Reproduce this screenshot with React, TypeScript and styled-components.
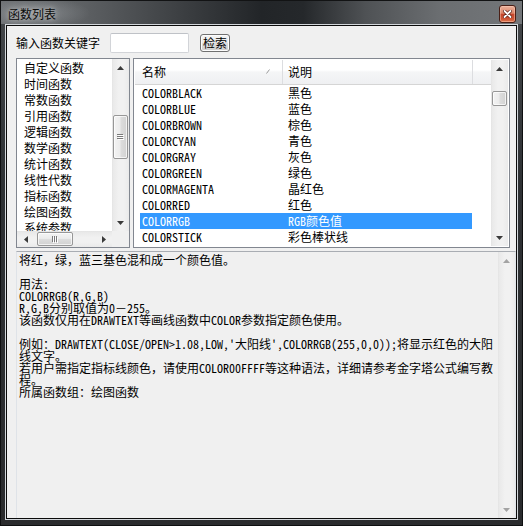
import React from "react";
import styled, { createGlobalStyle } from "styled-components";

const GlobalStyle = createGlobalStyle`
  html, body { margin: 0; padding: 0; background: #000; }
  body { width: 523px; height: 526px; overflow: hidden; }
  *, *::before, *::after { box-sizing: border-box; }
`;

const GROUPS = [
  "自定义函数",
  "时间函数",
  "常数函数",
  "引用函数",
  "逻辑函数",
  "数学函数",
  "统计函数",
  "线性代数",
  "指标函数",
  "绘图函数",
  "系统参数",
];

const FUNCS: [string, string][] = [
  ["COLORBLACK", "黑色"],
  ["COLORBLUE", "蓝色"],
  ["COLORBROWN", "棕色"],
  ["COLORCYAN", "青色"],
  ["COLORGRAY", "灰色"],
  ["COLORGREEN", "绿色"],
  ["COLORMAGENTA", "晶红色"],
  ["COLORRED", "红色"],
  ["COLORRGB", "RGB颜色值"],
  ["COLORSTICK", "彩色棒状线"],
];

const DESC = [
  "将红，绿，蓝三基色混和成一个颜色值。",
  "",
  "用法:",
  "COLORRGB(R,G,B)",
  "R,G,B分别取值为0－255。",
  "该函数仅用在DRAWTEXT等画线函数中COLOR参数指定颜色使用。",
  "",
  "例如：DRAWTEXT(CLOSE/OPEN>1.08,LOW,'大阳线',COLORRGB(255,0,0));将显示红色的大阳",
  "线文字。",
  "若用户需指定指标线颜色，请使用COLOR00FFFF等这种语法，详细请参考金字塔公式编写教",
  "程。",
  "所属函数组：绘图函数",
];

/* ---------- window chrome ---------- */

const Window = styled.div`
  width: 523px;
  height: 526px;
  display: flex;
  flex-direction: column;
  background: linear-gradient(to bottom, #45484b 0%, #2e3134 35%, #2a2b2d 100%);
  box-shadow: inset 0 0 0 1px #0e0f10;
  font-family: "Noto Sans CJK SC", sans-serif;
  font-size: 12px;
  color: #000;
`;

const TitleBar = styled.div`
  height: 24px;
  flex: none;
  display: flex;
  align-items: flex-start;
  padding-left: 8px;
  background:
    radial-gradient(ellipse 56px 16px at 34px 13px, rgba(175, 180, 184, 0.45), rgba(175, 180, 184, 0) 100%),
    linear-gradient(to right, #6c6f72 0%, #5d6063 16%, #3a3d40 36%, #222528 50%, #25282b 58%, #4f5255 70%, #6b6e71 84%, #737679 100%);
  box-shadow: inset 1px 1px 0 #121314, inset -1px 0 0 #121314;
`;

const Title = styled.div`
  margin-top: 6px;
  line-height: 16px;
  font-size: 12px;
  color: #0a0a0a;
  text-shadow: 0 0 5px rgba(255, 255, 255, 0.55), 0 0 9px rgba(255, 255, 255, 0.35);
`;

const CloseButton = styled.div`
  margin-left: auto;
  margin-top: 5px;
  margin-right: 7px;
  width: 17px;
  height: 18px;
  border: 1px solid #4a1f16;
  border-radius: 3px;
  display: flex;
  align-items: center;
  justify-content: center;
  background: linear-gradient(
    to bottom,
    #eab19c 0%,
    #dc8468 45%,
    #c5452b 52%,
    #cc5435 80%,
    #e0784f 100%
  );
  box-shadow: inset 0 0 0 1px rgba(255, 210, 190, 0.45);
`;

const FrameBody = styled.div`
  flex: 1;
  min-height: 0;
  display: flex;
  padding: 0 5px 6px 5px;
`;

const ClientEdge = styled.div`
  flex: 1;
  display: flex;
  border: 1px solid #d3d7db;
`;

const Client = styled.div`
  flex: 1;
  min-width: 0;
  display: flex;
  flex-direction: column;
  border: 1px solid #0b0b0b;
  background: #f0f0f0;
  padding: 7px 0 0 9px;
  overflow: hidden;
`;

/* ---------- search row ---------- */

const SearchRow = styled.div`
  height: 20px;
  flex: none;
  display: flex;
  align-items: center;
  margin-right: 6px;
`;

const Label = styled.span`
  line-height: 14px;
  margin-right: 10px;
  white-space: nowrap;
`;

const SearchInput = styled.div`
  width: 79px;
  height: 20px;
  border: 1px solid #d2d4d8;
  border-top-color: #bfc2c7;
  border-radius: 2px;
  background: #fff;
`;

const SearchButton = styled.div`
  margin-left: 11px;
  width: 30px;
  height: 18px;
  border: 1px solid #707070;
  border-radius: 3px;
  background: linear-gradient(to bottom, #f4f4f4 0%, #ebebeb 48%, #dddddd 52%, #cfcfcf 100%);
  box-shadow: inset 0 0 0 1px #fcfcfc;
  display: flex;
  align-items: center;
  justify-content: center;
  line-height: 14px;
  font-size: 12px;
`;

/* ---------- lists ---------- */

const ListsRow = styled.div`
  margin-top: 5px;
  height: 190px;
  flex: none;
  display: flex;
  gap: 3px;
  margin-right: 6px;
`;

const GroupList = styled.div`
  width: 114px;
  flex: none;
  border: 1px solid #828790;
  background: #fff;
  display: grid;
  grid-template-columns: 1fr 17px;
  grid-template-rows: 1fr 16px;
  overflow: hidden;
`;

const GroupItems = styled.div`
  overflow: hidden;
  padding-top: 1px;
  min-height: 0;
`;

const GroupItem = styled.div`
  height: 16px;
  line-height: 16px;
  padding-left: 7px;
  white-space: nowrap;
`;

const Corner = styled.div`
  background: #f0f0f0;
`;

const FuncList = styled.div`
  flex: 1;
  min-width: 0;
  border: 1px solid #828790;
  padding: 1px;
  background: #fff;
  display: grid;
  grid-template-columns: 1fr 17px;
  overflow: hidden;
`;

const Table = styled.div`
  overflow: hidden;
  min-width: 0;
`;

const Header = styled.div`
  height: 25px;
  display: flex;
  border-bottom: 1px solid #d5d5d5;
  background: linear-gradient(to bottom, #ffffff 0%, #ffffff 42%, #f5f6f7 50%, #eff0f2 100%);
`;

const HeaderCell = styled.div<{ $width: number; $pad: number }>`
  width: ${(p) => p.$width}px;
  flex: none;
  display: flex;
  align-items: center;
  justify-content: space-between;
  padding-left: ${(p) => p.$pad}px;
  line-height: 24px;
  border-right: 1px solid #dcdde0;
`;

const SortMark = styled.svg`
  margin-right: 12px;
  margin-top: -2px;
`;

const Row = styled.div<{ $selected?: boolean }>`
  margin-left: 5px;
  width: 332px;
  height: 16px;
  line-height: 16px;
  display: flex;
  white-space: nowrap;
  background: ${(p) => (p.$selected ? "#3399ff" : "transparent")};
  color: ${(p) => (p.$selected ? "#ffffff" : "#000000")};
`;

const NameCell = styled.div`
  width: 143px;
  flex: none;
  padding-left: 2px;
`;

const InfoCell = styled.div`
  padding-left: 5px;
`;

/* ---------- description ---------- */

const Description = styled.div`
  margin-top: 3px;
  flex: 1;
  min-height: 0;
  border: 1px solid #dfe3e8;
  border-top-color: #a9adb3;
  border-bottom: none;
  display: grid;
  grid-template-columns: 1fr 17px;
  overflow: hidden;
`;

const DescText = styled.div`
  padding: 2px 0 0 2px;
  overflow: hidden;
  min-width: 0;
`;

const DescLine = styled.div`
  height: 12px;
  line-height: 12px;
  white-space: pre;
`;

const Run = styled.span<{ $latin?: boolean }>`
  display: inline-block;
  height: 12px;
  line-height: 12px;
  vertical-align: top;
  font-family: ${(p) =>
    p.$latin ? `"Noto Sans Mono CJK SC", "Liberation Mono", monospace` : `"Noto Sans CJK SC", sans-serif`};
`;

const Latin = styled.span`
  font-family: "Noto Sans Mono CJK SC", "Liberation Mono", monospace;
`;

/* ---------- scrollbars ---------- */

const VScroll = styled.div`
  display: flex;
  flex-direction: column;
  min-height: 0;
  background: linear-gradient(to right, #e2e2e2 0px, #e9e9e9 1px, #f1f1f1 40%, #f1f1f1 70%, #eaeaea 100%);
`;

const HScroll = styled.div`
  display: flex;
  min-width: 0;
  background: linear-gradient(to bottom, #e2e2e2 0px, #e9e9e9 1px, #f1f1f1 40%, #f1f1f1 70%, #eaeaea 100%);
`;

const ScrollBtn = styled.div`
  flex: none;
  width: 17px;
  height: 17px;
  display: flex;
  align-items: center;
  justify-content: center;
`;

const HScrollBtn = styled(ScrollBtn)`
  height: 16px;
`;

const VTrack = styled.div`
  flex: 1;
  min-height: 0;
  display: flex;
  flex-direction: column;
`;

const HTrack = styled.div`
  flex: 1;
  min-width: 0;
  display: flex;
`;

const VThumb = styled.div<{ $offset: number; $size: number }>`
  margin: ${(p) => p.$offset}px 1px 0 1px;
  height: ${(p) => p.$size}px;
  flex: none;
  border: 1px solid #979797;
  border-radius: 2px;
  background: linear-gradient(to right, #f3f3f3 0%, #ececec 45%, #dcdcdc 55%, #d2d2d2 100%);
  box-shadow: inset 0 0 0 1px rgba(255, 255, 255, 0.7);
  display: flex;
  align-items: center;
  justify-content: center;
`;

const HThumb = styled.div<{ $offset: number; $size: number }>`
  margin: 1px 0 1px ${(p) => p.$offset}px;
  width: ${(p) => p.$size}px;
  flex: none;
  border: 1px solid #979797;
  border-radius: 2px;
  background: linear-gradient(to bottom, #f3f3f3 0%, #ececec 45%, #dcdcdc 55%, #d2d2d2 100%);
  box-shadow: inset 0 0 0 1px rgba(255, 255, 255, 0.7);
  display: flex;
  align-items: center;
  justify-content: center;
`;

type Dir = "up" | "down" | "left" | "right";

function Arrow({ dir, disabled }: { dir: Dir; disabled?: boolean }) {
  const fill = disabled ? "#a3a3a3" : "#3a3a3a";
  const vertical = dir === "up" || dir === "down";
  const w = vertical ? 7 : 4;
  const h = vertical ? 4 : 7;
  const pts =
    dir === "up"
      ? "3.5,0 7,4 0,4"
      : dir === "down"
      ? "0,0 7,0 3.5,4"
      : dir === "left"
      ? "4,0 4,7 0,3.5"
      : "0,0 4,3.5 0,7";
  return (
    <svg width={w} height={h} viewBox={`0 0 ${w} ${h}`}>
      <polygon points={pts} fill={fill} />
    </svg>
  );
}

function Grip({ vertical }: { vertical: boolean }) {
  if (vertical) {
    return (
      <svg width="7" height="7" viewBox="0 0 7 7">
        {[0, 2, 4].map((y) => (
          <g key={y}>
            <rect x="0" y={y} width="6" height="1" fill="#7a7a7a" />
            <rect x="1" y={y + 1} width="6" height="1" fill="#ffffff" />
          </g>
        ))}
      </svg>
    );
  }
  return (
    <svg width="7" height="7" viewBox="0 0 7 7">
      {[0, 2, 4].map((x) => (
        <g key={x}>
          <rect x={x} y="0" width="1" height="6" fill="#7a7a7a" />
          <rect x={x + 1} y="1" width="1" height="6" fill="#ffffff" />
        </g>
      ))}
    </svg>
  );
}

function VerticalScrollbar({
  thumb,
  disabled,
}: {
  thumb?: { offset: number; size: number; grip?: boolean };
  disabled?: boolean;
}) {
  return (
    <VScroll>
      <ScrollBtn>
        <Arrow dir="up" disabled={disabled} />
      </ScrollBtn>
      <VTrack>
        {thumb && (
          <VThumb $offset={thumb.offset} $size={thumb.size}>
            {thumb.grip && <Grip vertical />}
          </VThumb>
        )}
      </VTrack>
      <ScrollBtn>
        <Arrow dir="down" disabled={disabled} />
      </ScrollBtn>
    </VScroll>
  );
}

function HorizontalScrollbar({ offset, size }: { offset: number; size: number }) {
  return (
    <HScroll>
      <HScrollBtn>
        <Arrow dir="left" />
      </HScrollBtn>
      <HTrack>
        <HThumb $offset={offset} $size={size}>
          <Grip vertical={false} />
        </HThumb>
      </HTrack>
      <HScrollBtn>
        <Arrow dir="right" />
      </HScrollBtn>
    </HScroll>
  );
}

const splitRuns = (text: string) => text.split(/([\x20-\x7e]+)/);

function Mixed({ text }: { text: string }) {
  const parts = splitRuns(text);
  return (
    <>
      {parts.map((part, i) =>
        part === "" ? null : i % 2 === 1 ? <Latin key={i}>{part}</Latin> : <span key={i}>{part}</span>
      )}
    </>
  );
}

function DescRuns({ text }: { text: string }) {
  const parts = splitRuns(text);
  return (
    <>
      {parts.map((part, i) =>
        part === "" ? null : (
          <Run key={i} $latin={i % 2 === 1}>
            {part}
          </Run>
        )
      )}
    </>
  );
}

function CloseGlyph() {
  return (
    <svg width="9" height="8" viewBox="0 0 9 8">
      <path d="M1.5 1 L7.5 7 M7.5 1 L1.5 7" stroke="#5a1e12" strokeWidth="3.2" strokeLinecap="round" />
      <path d="M1.5 1 L7.5 7 M7.5 1 L1.5 7" stroke="#ffffff" strokeWidth="1.8" strokeLinecap="round" />
    </svg>
  );
}

export default function App() {
  return (
    <>
      <GlobalStyle />
      <Window>
        <TitleBar>
          <Title>函数列表</Title>
          <CloseButton>
            <CloseGlyph />
          </CloseButton>
        </TitleBar>
        <FrameBody>
          <ClientEdge>
            <Client>
              <SearchRow>
                <Label>输入函数关键字</Label>
                <SearchInput />
                <SearchButton>检索</SearchButton>
              </SearchRow>
              <ListsRow>
                <GroupList>
                  <GroupItems>
                    {GROUPS.map((g) => (
                      <GroupItem key={g}>{g}</GroupItem>
                    ))}
                  </GroupItems>
                  <VerticalScrollbar thumb={{ offset: 39, size: 44, grip: true }} />
                  <HorizontalScrollbar offset={3} size={36} />
                  <Corner />
                </GroupList>
                <FuncList>
                  <Table>
                    <Header>
                      <HeaderCell $width={148} $pad={7}>
                        <span>名称</span>
                        <SortMark width="4" height="5" viewBox="0 0 4 5">
                          <path d="M0.5 4.5 L3.5 0.5" stroke="#9a9a9a" strokeWidth="1" />
                        </SortMark>
                      </HeaderCell>
                      <HeaderCell $width={190} $pad={5}>
                        <span>说明</span>
                      </HeaderCell>
                    </Header>
                    {FUNCS.map(([name, info]) => (
                      <Row key={name} $selected={name === "COLORRGB"}>
                        <NameCell>
                          <Mixed text={name} />
                        </NameCell>
                        <InfoCell>
                          <Mixed text={info} />
                        </InfoCell>
                      </Row>
                    ))}
                  </Table>
                  <VerticalScrollbar thumb={{ offset: 14, size: 15 }} />
                </FuncList>
              </ListsRow>
              <Description>
                <DescText>
                  {DESC.map((line, i) => (
                    <DescLine key={i}>
                      <DescRuns text={line} />
                    </DescLine>
                  ))}
                </DescText>
                <VerticalScrollbar disabled />
              </Description>
            </Client>
          </ClientEdge>
        </FrameBody>
      </Window>
    </>
  );
}
